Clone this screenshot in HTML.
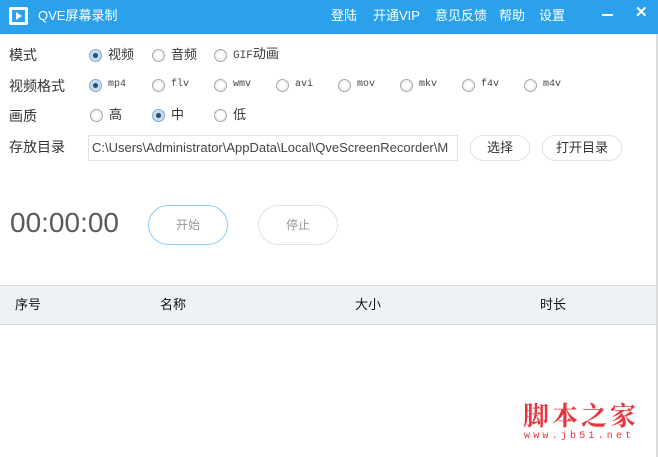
<!DOCTYPE html>
<html><head><meta charset="utf-8"><style>
*{margin:0;padding:0;box-sizing:border-box}
body{width:658px;height:457px;overflow:hidden;background:#fff;position:relative;font-family:"Liberation Sans","Noto Sans CJK SC",sans-serif;color:#333}
.a{position:absolute;white-space:nowrap}
.bar{position:absolute;left:0;top:0;width:658px;height:34px;background:#2ba1ec}
.t{color:#fff;font-size:13px;top:7px;line-height:18px}
.lb{font-size:14px;color:#333;left:9px;line-height:18px}
.it{position:absolute;height:16px;display:flex;align-items:center;white-space:nowrap}
.r{position:relative;flex:none;width:13px;height:13px;border-radius:50%;border:1px solid #a8a8a8;background:radial-gradient(circle,#fff 30%,#e0e0e0 100%);margin-right:6px}
.r.on::after{content:"";position:absolute;left:3px;top:3px;width:5px;height:5px;border-radius:50%;background:#2d4e6e}
.r.on{border-color:#7aa7cc;background:radial-gradient(circle,#bcd6ec 40%,#e8f0f6 100%)}
.o{font-size:13px;color:#333;line-height:16px}
.m{font-family:"Liberation Mono","Noto Sans CJK SC",monospace;font-size:10px;color:#444;line-height:16px}
.btn{position:absolute;border:1px solid #dde3e8;border-radius:14px;font-size:13px;text-align:center;color:#333}
</style></head><body>
<div class="bar"></div>
<div class="a" style="left:9px;top:7px;width:19px;height:18px;background:#fff;border-radius:2px">
<div style="position:absolute;left:3px;top:3px;width:13px;height:12px;background:#2ba1ec"></div>
<svg width="19" height="18" style="position:absolute;left:0;top:0"><path d="M7 5 L13 9 L7 13Z" fill="#fff"/></svg></div>
<div class="a t" style="left:38px">QVE屏幕录制</div>
<div class="a t" style="left:331px">登陆</div>
<div class="a t" style="left:373px">开通VIP</div>
<div class="a t" style="left:435px">意见反馈</div>
<div class="a t" style="left:499px">帮助</div>
<div class="a t" style="left:539px">设置</div>
<div class="a" style="left:602px;top:14px;width:11px;height:2px;background:#fff"></div>
<div class="a" style="left:635px;top:3px;color:#fff;font-size:15px;font-weight:bold">✕</div>

<div class="a lb" style="top:46px">模式</div>
<div class="it" style="left:89px;top:47px"><span class="r on"></span><span class="o">视频</span></div>
<div class="it" style="left:152px;top:47px"><span class="r"></span><span class="o">音频</span></div>
<div class="it" style="left:214px;top:47px"><span class="r"></span><span class="o"><span class="m" style="font-size:11px">GIF</span>动画</span></div>

<div class="a lb" style="top:77px">视频格式</div>
<div class="it" style="left:89px;top:77px"><span class="r on"></span><span class="m">mp4</span></div>
<div class="it" style="left:152px;top:77px"><span class="r"></span><span class="m">flv</span></div>
<div class="it" style="left:214px;top:77px"><span class="r"></span><span class="m">wmv</span></div>
<div class="it" style="left:276px;top:77px"><span class="r"></span><span class="m">avi</span></div>
<div class="it" style="left:338px;top:77px"><span class="r"></span><span class="m">mov</span></div>
<div class="it" style="left:400px;top:77px"><span class="r"></span><span class="m">mkv</span></div>
<div class="it" style="left:462px;top:77px"><span class="r"></span><span class="m">f4v</span></div>
<div class="it" style="left:524px;top:77px"><span class="r"></span><span class="m">m4v</span></div>

<div class="a lb" style="top:107px">画质</div>
<div class="it" style="left:90px;top:107px"><span class="r"></span><span class="o">高</span></div>
<div class="it" style="left:152px;top:107px"><span class="r on"></span><span class="o">中</span></div>
<div class="it" style="left:214px;top:107px"><span class="r"></span><span class="o">低</span></div>

<div class="a lb" style="top:138px">存放目录</div>
<div class="a" style="left:88px;top:135px;width:370px;height:26px;border:1px solid #dde3e8;overflow:hidden;font-size:13px;color:#444;padding:0 0 0 3px;line-height:24px">C:\Users\Administrator\AppData\Local\QveScreenRecorder\M</div>
<div class="btn" style="left:470px;top:135px;width:60px;height:26px;line-height:24px">选择</div>
<div class="btn" style="left:542px;top:135px;width:80px;height:26px;line-height:24px">打开目录</div>

<div class="a" style="left:10px;top:206px;font-size:28px;color:#5a5a5a;line-height:34px">00:00:00</div>
<div class="btn" style="left:148px;top:205px;width:80px;height:40px;line-height:38px;border-radius:20px;border-color:#8ccff5;color:#999;font-size:12px">开始</div>
<div class="btn" style="left:258px;top:205px;width:80px;height:40px;line-height:38px;border-radius:20px;color:#999;font-size:12px">停止</div>

<div class="a" style="left:0;top:285px;width:656px;height:40px;background:#eef2f5;border-top:1px solid #d6dadd;border-bottom:1px solid #d6dadd"></div>
<div class="a" style="left:15px;top:296px;font-size:13px;color:#111;line-height:18px">序号</div>
<div class="a" style="left:160px;top:296px;font-size:13px;color:#111;line-height:18px">名称</div>
<div class="a" style="left:355px;top:296px;font-size:13px;color:#111;line-height:18px">大小</div>
<div class="a" style="left:540px;top:296px;font-size:13px;color:#111;line-height:18px">时长</div>
<div class="a" style="left:656px;top:34px;width:2px;height:423px;background:#dcdcdc"></div>

<div class="a" style="left:523px;top:400px;font-family:'Noto Serif CJK SC',serif;font-weight:bold;font-size:26px;line-height:30px;color:#e8343c;letter-spacing:3px">脚本之家</div>
<div class="a" style="left:524px;top:431px;font-family:'Liberation Mono',monospace;font-size:10px;line-height:12px;color:#e8343c;letter-spacing:3.2px">www.jb51.net</div>
</body></html>
